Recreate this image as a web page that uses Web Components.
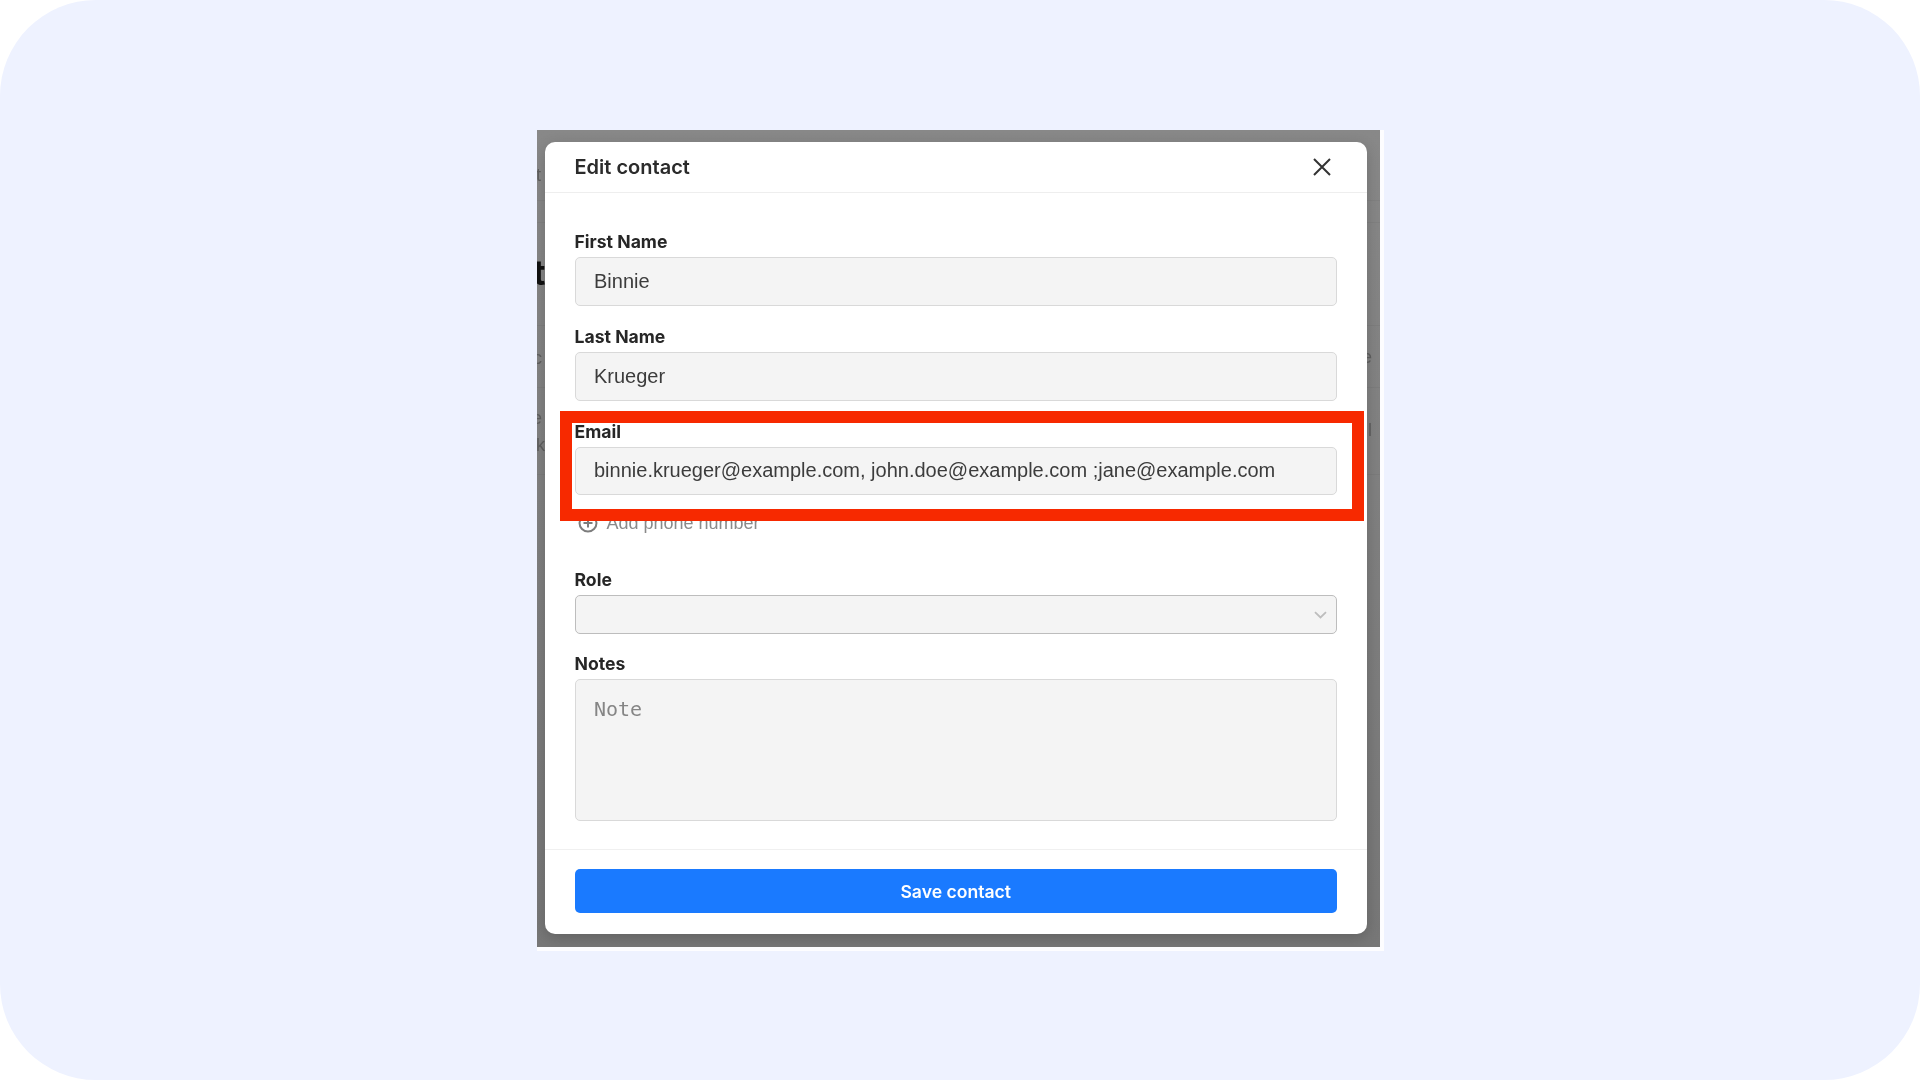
<!DOCTYPE html>
<html lang="en">
<head>
<meta charset="utf-8">
<title>Edit contact</title>
<style>
	html, body { margin: 0; background: #fff; }
</style>
</head>
<body>
<shot-page>
	<edit-contact>
		<form-field label="First Name"><text-box>Binnie</text-box></form-field>
		<form-field label="Last Name"><text-box>Krueger</text-box></form-field>
		<form-field label="Email"><text-box h="48">binnie.krueger@example.com, john.doe@example.com ;jane@example.com</text-box></form-field>
		<add-phone>Add phone number</add-phone>
		<form-field label="Role" style="margin-top:35px"><select-box></select-box></form-field>
		<form-field label="Notes"><text-box h="142" mono>Note</text-box></form-field>
	</edit-contact>
	<red-box></red-box>
</shot-page>

<script>
const sans = `"Liberation Sans", Arial, sans-serif`
const ui = `Inter, "Liberation Sans", sans-serif`

customElements.define("shot-page", class extends HTMLElement {
	connectedCallback() {
		if (this.shadowRoot) return
		this.attachShadow({mode: "open"}).innerHTML = `
			<style>
				:host {
					display: block;
					box-sizing: border-box;
					width: 1920px;
					height: 1080px;
					padding: 130px 0 0 537px;
					background: #eef2ff;
					border-radius: 96px;
					overflow: hidden;
				}
				.frame {
					width: 847px;
					height: 821px;
					background: #fdfdff;
					filter: blur(.45px);
				}
				.backdrop {
					position: relative;
					box-sizing: border-box;
					width: 843px;
					height: 817px;
					padding: 12px 13px 13px 8px;
					background: linear-gradient(to bottom, #888 0, #7f7f7f 50%, #777 100%);
					overflow: hidden;
				}
				.line {
					position: absolute;
					left: 0;
					right: 0;
					height: 1px;
					background: #0000000a;
				}
				.ghost {
					position: absolute;
					font: 18px/20px ${sans};
					color: #5f5f5f;
				}
				.big {
					font: 700 34px/34px ${ui};
					color: #111;
				}
			</style>
			<div class="frame">
				<div class="backdrop">
					<i class="line" style="top:70px"></i>
					<i class="line" style="top:92px"></i>
					<i class="line" style="top:195px"></i>
					<i class="line" style="top:257px"></i>
					<i class="line" style="top:344px"></i>
					<span class="ghost" style="left:-1px;top:35px">t</span>
					<span class="ghost big" style="left:-4px;top:126px">t</span>
					<span class="ghost" style="left:-4px;top:218px">c</span>
					<span class="ghost" style="left:-5px;top:278px">e</span>
					<span class="ghost" style="left:-1px;top:305px">k</span>
					<span class="ghost" style="left:825px;top:217px">e</span>
					<span class="ghost" style="left:831px;top:290px">l</span>
					<slot></slot>
				</div>
			</div>
		`
	}
})

customElements.define("edit-contact", class extends HTMLElement {
	connectedCallback() {
		if (this.shadowRoot) return
		this.attachShadow({mode: "open"}).innerHTML = `
			<style>
				:host {
					display: block;
					position: relative;
					width: 822px;
					height: 792px;
					background: #fff;
					border-radius: 10px;
					box-shadow: 0 4px 14px #0000002e;
					color: #2b2b2b;
				}
				header {
					display: flex;
					align-items: center;
					justify-content: space-between;
					height: 50px;
					padding: 0 36px 0 29.5px;
					border-bottom: 1px solid #eeeeee;
					font: 600 20px/23px ${ui};
				}
				svg { display: block; }
				.body {
					display: flex;
					flex-direction: column;
					padding: 39px 30px 28px 29.5px;
				}
				footer {
					padding: 19px 30px 21px 29.5px;
					border-top: 1px solid #f0f0f0;
				}
				button {
					display: block;
					width: 100%;
					height: 44px;
					border: 0;
					border-radius: 5px;
					background: #1a7aff;
					color: #fff;
					font: 600 17.6px/44px ${ui};
				}
			</style>
			<header>
				<span>Edit contact</span>
				<svg width="18" height="18" viewBox="0 0 18 18" fill="none" stroke="#333" stroke-width="2"><path d="M1 1 17 17M17 1 1 17"/></svg>
			</header>
			<div class="body"><slot></slot></div>
			<footer><button>Save contact</button></footer>
		`
	}
})

customElements.define("form-field", class extends HTMLElement {
	connectedCallback() {
		if (this.shadowRoot) return
		this.attachShadow({mode: "open"}).innerHTML = `
			<style>
				:host {
					display: block;
					margin-bottom: 21px;
				}
				:host(:last-child) { margin-bottom: 0; }
				label {
					display: block;
					height: 20px;
					margin-bottom: 5px;
					font: 700 17.6px/20px ${ui};
					color: #262626;
				}
			</style>
			<label>${this.getAttribute("label")}</label>
			<slot></slot>
		`
	}
})

customElements.define("text-box", class extends HTMLElement {
	connectedCallback() {
		if (this.shadowRoot) return
		const h = this.getAttribute("h") || 49
		const mono = this.hasAttribute("mono")
		this.attachShadow({mode: "open"}).innerHTML = `
			<style>
				:host {
					display: block;
					box-sizing: border-box;
					height: ${h}px;
					padding: ${mono ? "17px 18.5px" : "0 18.5px"};
					background: #f4f4f4;
					border: 1.5px solid #d9d9d9;
					border-radius: 5px;
					font: ${mono ? `20px/24px "DejaVu Sans Mono", monospace` : `20px/${h - 3}px ${sans}`};
					color: ${mono ? "#858585" : "#3c3c3c"};
					white-space: nowrap;
				}
			</style>
			<slot></slot>
		`
	}
})

customElements.define("select-box", class extends HTMLElement {
	connectedCallback() {
		if (this.shadowRoot) return
		this.attachShadow({mode: "open"}).innerHTML = `
			<style>
				:host {
					display: flex;
					align-items: center;
					justify-content: flex-end;
					box-sizing: border-box;
					height: 39px;
					margin-bottom: -1px;
					padding-right: 9px;
					background: #f4f4f4;
					border: 1.5px solid #bdbdbd;
					border-radius: 5px;
				}
			</style>
			<svg width="13" height="8" viewBox="0 0 13 8" fill="none" stroke="#bdbdbd" stroke-width="1.8"><path d="M1 1.2 6.5 6.5 12 1.2"/></svg>
		`
	}
})

customElements.define("add-phone", class extends HTMLElement {
	connectedCallback() {
		if (this.shadowRoot) return
		this.attachShadow({mode: "open"}).innerHTML = `
			<style>
				:host {
					display: flex;
					align-items: center;
					gap: 9px;
					height: 24px;
					margin-top: -5px;
					padding-left: 3px;
					font: 18px/24px ${sans};
					color: #8a8a8a;
				}
			</style>
			<svg width="20" height="20" viewBox="0 0 20 20" fill="none" stroke="#7d7d7d" stroke-width="2"><circle cx="10" cy="10" r="8.5"/><path d="M10 5.5v9M5.5 10h9"/></svg>
			<slot></slot>
		`
	}
})

customElements.define("red-box", class extends HTMLElement {
	connectedCallback() {
		if (this.shadowRoot) return
		this.attachShadow({mode: "open"}).innerHTML = `
			<style>
				:host {
					position: absolute;
					left: 23px;
					top: 281px;
					box-sizing: border-box;
					width: 804px;
					height: 110px;
					border: 12px solid #f72900;
				}
			</style>
		`
	}
})
</script>
</body>
</html>
